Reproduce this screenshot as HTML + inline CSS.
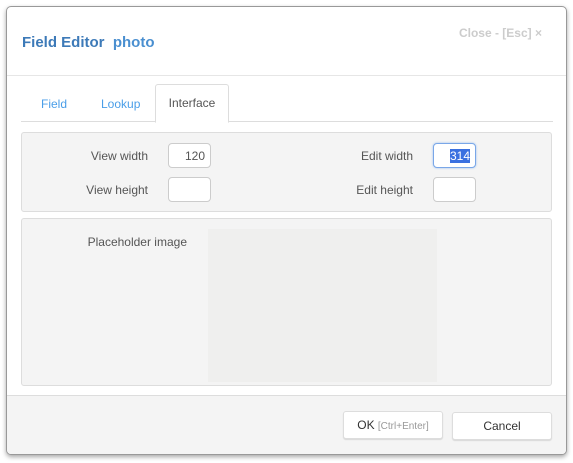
<!DOCTYPE html>
<html><head><style>
body{margin:0;width:573px;height:463px;background:#fff;font-family:"Liberation Sans",sans-serif;font-size:12px;color:#444;position:relative;overflow:hidden}
.dlg{position:absolute;left:6px;top:6px;width:559px;height:447px;border:1px solid #999;border-radius:5px;background:#fff;box-shadow:0 2px 5px rgba(0,0,0,.35);overflow:hidden}
.a{position:absolute}
.title{left:15px;top:27px;font-size:15px;font-weight:bold;color:#3d7ab8}
.close{right:24px;top:19px;font-size:12px;font-weight:bold;color:#ccc}
.hdr{left:0;top:68px;width:559px;border-top:1px solid #e6e6e6}
.tabline{left:14px;top:114px;width:532px;border-top:1px solid #ddd}
.tab{font-size:12px;color:#4a9ee8}
.tabact{left:148px;top:77px;width:72px;height:37px;border:1px solid #ddd;border-bottom:1px solid #fff;border-radius:3px 3px 0 0;background:#fff;color:#555;text-align:center;line-height:37px}
.panel{left:14px;width:529px;background:#f4f4f4;border:1px solid #ddd;border-radius:3px}
.lbl{color:#555;text-align:right}
.inp{width:43px;height:25px;border:1px solid #ccc;border-radius:4px;background:#fff;text-align:right;line-height:25px;box-sizing:border-box;padding-right:5px;color:#555}
.foot{left:0;top:388px;width:559px;height:59px;background:#f4f4f4;border-top:1px solid #ddd}
.btn{height:26px;border:1px solid #ddd;border-radius:3px;background:#fff;box-shadow:0 1px 1px rgba(0,0,0,.12);text-align:center;line-height:26px;color:#333}
</style></head><body>
<div class="dlg">
<div class="a title">Field Editor&nbsp; <span style="color:#4a8fd0">photo</span></div>
<div class="a close">Close - [Esc] ×</div>
<div class="a hdr"></div>
<div class="a tabline"></div>
<div class="a tab" style="left:34px;top:90px">Field</div>
<div class="a tab" style="left:94px;top:90px">Lookup</div>
<div class="a tabact">Interface</div>
<div class="a panel" style="top:125px;height:78px">
  <div class="a lbl" style="left:40px;width:86px;top:16px">View width</div>
  <div class="a inp" style="left:146px;top:10px">120</div>
  <div class="a lbl" style="left:40px;width:86px;top:50px">View height</div>
  <div class="a inp" style="left:146px;top:44px"></div>
  <div class="a lbl" style="left:300px;width:91px;top:16px">Edit width</div>
  <div class="a inp" style="left:411px;top:10px;border-color:#7aa7e8;box-shadow:0 0 2px #9bc0f0"><span style="background:#3a70e0;color:#fff">314</span></div>
  <div class="a lbl" style="left:300px;width:91px;top:50px">Edit height</div>
  <div class="a inp" style="left:411px;top:44px"></div>
</div>
<div class="a panel" style="top:211px;height:166px">
  <div class="a lbl" style="left:40px;width:125px;top:16px">Placeholder image</div>
  <div class="a" style="left:186px;top:10px;width:229px;height:153px;background:#efefee"></div>
</div>
<div class="a foot">
  <div class="a btn" style="left:336px;top:15px;width:98px">OK <span style="color:#999;font-size:10px">[Ctrl+Enter]</span></div>
  <div class="a btn" style="left:445px;top:16px;width:98px">Cancel</div>
</div>
</div>
</body></html>
